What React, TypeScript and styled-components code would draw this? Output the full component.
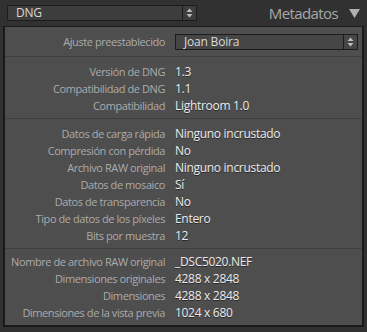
import styled, { createGlobalStyle } from "styled-components";

const GlobalStyle = createGlobalStyle`
  html, body {
    margin: 0;
    padding: 0;
    background: #303030;
  }
  body {
    font-family: "Open Sans", "Liberation Sans", sans-serif;
  }
`;

const Page = styled.div`
  width: 367px;
  height: 332px;
  display: flex;
  flex-direction: column;
  background: #313131;
`;

const Header = styled.div`
  height: 26px;
  display: flex;
  align-items: center;
  padding: 0 7px 0 7px;
  box-sizing: border-box;
`;

const Select = styled.div<{ $width: number; $bg?: string }>`
  width: ${(p) => p.$width}px;
  height: 16px;
  box-sizing: border-box;
  border: 1px solid #1c1c1c;
  background: ${(p) => p.$bg || "#3d3d3d"};
  display: flex;
  align-items: center;
  color: #d8d8d8;
  font-size: 12px;
`;

const SelectText = styled.span<{ $pad: number }>`
  flex: 1;
  padding-left: ${(p) => p.$pad}px;
  line-height: 14px;
  white-space: nowrap;
  letter-spacing: -0.2px;
`;

const Spinner = styled.div`
  width: 13px;
  height: 100%;
  border-left: 1px solid #1c1c1c;
  display: flex;
  align-items: center;
  justify-content: center;
`;

const Title = styled.div`
  margin-left: auto;
  display: flex;
  align-items: center;
  gap: 11px;
  color: #a8a8a8;
  font-size: 15px;
  letter-spacing: -0.6px;
`;

const Panel = styled.div`
  margin: 0 3px;
  height: 301px;
  box-sizing: border-box;
  border: 2px solid #1a1a1a;
  border-top-width: 1px;
  background: #4e4e4e;
  display: flex;
  flex-direction: column;
`;

const Section = styled.div<{ $last?: boolean; $top: number }>`
  padding: ${(p) => p.$top}px 0 4px;
  border-bottom: ${(p) => (p.$last ? "none" : "1px solid #3f3f3f")};
  display: flex;
  flex-direction: column;
`;

const PresetSection = styled.div`
  height: 30px;
  border-bottom: 1px solid #3f3f3f;
  display: flex;
  align-items: center;
`;

const Row = styled.div`
  height: 17px;
  width: 100%;
  display: grid;
  grid-template-columns: 160px 1fr;
  column-gap: 10px;
  align-items: center;
`;

const Label = styled.span`
  text-align: right;
  color: #ababab;
  font-size: 11px;
  letter-spacing: -0.42px;
  white-space: nowrap;
`;

const Value = styled.span`
  color: #ececec;
  font-size: 12px;
  letter-spacing: -0.3px;
  white-space: nowrap;
  text-shadow: 0 1px 0 #2a2a2a;
`;

const Arrows = () => (
  <svg width="7" height="10" viewBox="0 0 7 10">
    <path d="M3.5 0.5 L6.5 4 H0.5 Z" fill="#bdbdbd" />
    <path d="M3.5 9.5 L6.5 6 H0.5 Z" fill="#bdbdbd" />
  </svg>
);

const Triangle = () => (
  <svg width="11" height="9" viewBox="0 0 11 9">
    <path d="M0 0 H11 L5.5 9 Z" fill="#b0b0b0" />
  </svg>
);

type Item = [string, string];

const sections: { top: number; items: Item[] }[] = [
  {
    top: 6,
    items: [
      ["Versión de DNG", "1.3"],
      ["Compatibilidad de DNG", "1.1"],
      ["Compatibilidad", "Lightroom 1.0"],
    ],
  },
  {
    top: 6,
    items: [
      ["Datos de carga rápida", "Ninguno incrustado"],
      ["Compresión con pérdida", "No"],
      ["Archivo RAW original", "Ninguno incrustado"],
      ["Datos de mosaico", "Sí"],
      ["Datos de transparencia", "No"],
      ["Tipo de datos de los píxeles", "Entero"],
      ["Bits por muestra", "12"],
    ],
  },
  {
    top: 4,
    items: [
      ["Nombre de archivo RAW original", "_DSC5020.NEF"],
      ["Dimensiones originales", "4288 x 2848"],
      ["Dimensiones", "4288 x 2848"],
      ["Dimensiones de la vista previa", "1024 x 680"],
    ],
  },
];

export default function App() {
  return (
    <Page>
      <GlobalStyle />
      <Header>
        <Select $width={190}>
          <SelectText $pad={8}>DNG</SelectText>
          <Spinner>
            <Arrows />
          </Spinner>
        </Select>
        <Title>
          Metadatos
          <Triangle />
        </Title>
      </Header>
      <Panel>
        <PresetSection>
          <Row>
            <Label>Ajuste preestablecido</Label>
            <Select $width={183} $bg="#464646">
              <SelectText $pad={8}>Joan Boira</SelectText>
              <Spinner>
                <Arrows />
              </Spinner>
            </Select>
          </Row>
        </PresetSection>
        {sections.map((s, i) => (
          <Section key={i} $top={s.top} $last={i === sections.length - 1}>
            {s.items.map(([label, value]) => (
              <Row key={label}>
                <Label>{label}</Label>
                <Value>{value}</Value>
              </Row>
            ))}
          </Section>
        ))}
      </Panel>
    </Page>
  );
}
